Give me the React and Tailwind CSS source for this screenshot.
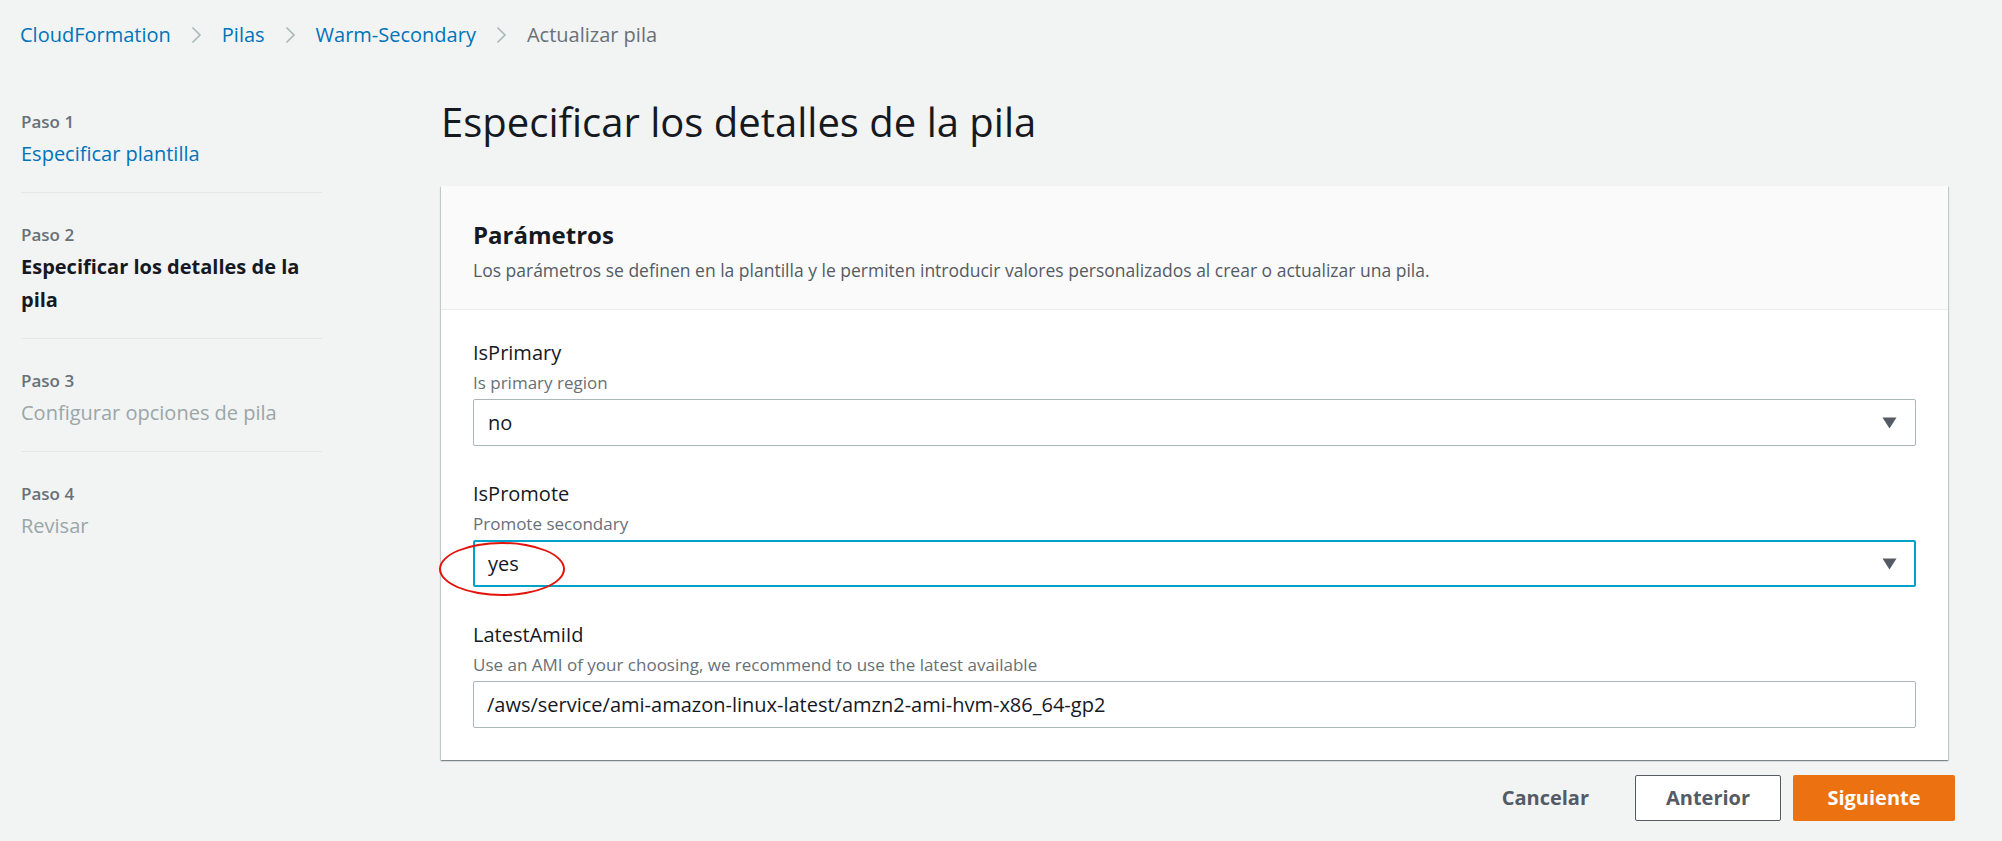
import React from "react";

const steps = [
  { step: "Paso 1", label: "Especificar plantilla", state: "link" },
  { step: "Paso 2", label: "Especificar los detalles de la pila", state: "active" },
  { step: "Paso 3", label: "Configurar opciones de pila", state: "disabled" },
  { step: "Paso 4", label: "Revisar", state: "disabled" },
];

function Chevron() {
  return (
    <svg width="11" height="18" viewBox="0 0 11 18" fill="none">
      <path d="M1.5 1.5L9 9L1.5 16.5" stroke="#aab7b8" strokeWidth="1.6" />
    </svg>
  );
}

function Caret() {
  return (
    <svg width="15" height="12" viewBox="0 0 15 12">
      <path d="M0.5 0.5H14.5L7.5 11.5Z" fill="#545b64" />
    </svg>
  );
}

function Field({ name, help, children }) {
  return (
    <div>
      <div className="text-[20px] leading-[28px] text-[#16191f]">{name}</div>
      <div className="mt-[4px] text-[17px] leading-[24px] text-[#687078]">{help}</div>
      <div className="mt-[4px]">{children}</div>
    </div>
  );
}

export default function App() {
  return (
    <div className="w-full h-[841px] overflow-hidden bg-[#f2f3f3] font-['Open_Sans',sans-serif] text-[#16191f]">
      {/* breadcrumb */}
      <div className="h-[70px] flex items-center gap-[20px] pl-[20px] text-[20px]">
        <span className="text-[#0073bb]">CloudFormation</span>
        <Chevron />
        <span className="text-[#0073bb]">Pilas</span>
        <Chevron />
        <span className="text-[#0073bb]">Warm-Secondary</span>
        <Chevron />
        <span className="text-[#687078]">Actualizar pila</span>
      </div>

      <div className="flex">
        {/* wizard steps */}
        <nav className="w-[322px] pl-[21px] pt-[10px] shrink-0">
          {steps.map((s, i) => (
            <div
              key={s.step}
              className={
                "pt-[30px] pb-[22px] " + (i < steps.length - 1 ? "border-b border-[#e3e7e8]" : "")
              }
            >
              <div className="text-[17px] leading-[24px] font-semibold text-[#687078]">{s.step}</div>
              <div
                className={
                  "mt-[3px] text-[20px] leading-[33px] " +
                  (s.state === "link"
                    ? "font-medium text-[#0073bb]"
                    : s.state === "active"
                    ? "font-bold text-[#16191f]"
                    : "font-medium text-[#9aa6a7]")
                }
              >
                {s.label}
              </div>
            </div>
          ))}
        </nav>

        {/* main */}
        <main className="ml-[119px] w-[1507px] shrink-0">
          <h1 className="pt-[28px] text-[40px] leading-[48px] font-normal text-[#16191f]">
            Especificar los detalles de la pila
          </h1>

          <section className="mt-[40px] bg-white shadow-[0_1px_1px_0_rgba(0,28,36,0.3),1px_1px_1px_0_rgba(0,28,36,0.15),-1px_1px_1px_0_rgba(0,28,36,0.15)]">
            <div className="bg-[#fafafa] border-b border-[#eaeded] px-[32px] pt-[33px] pb-[27px]">
              <h2 className="text-[24px] leading-[32px] font-bold text-[#16191f]">Parámetros</h2>
              <p className="mt-[7px] text-[17.5px] leading-[24px] text-[#545b64]">
                Los parámetros se definen en la plantilla y le permiten introducir valores personalizados al crear o actualizar una pila.
              </p>
            </div>

            <div className="px-[32px] pt-[29px] pb-[32px] flex flex-col gap-[34px]">
              <Field name="IsPrimary" help="Is primary region">
                <div className="h-[47px] flex items-center justify-between pl-[14px] pr-[18px] bg-white border border-[#aab7b8] rounded-[2px] text-[20px]">
                  <span>no</span>
                  <Caret />
                </div>
              </Field>

              <Field name="IsPromote" help="Promote secondary">
                <div className="relative h-[47px] flex items-center justify-between pl-[13px] pr-[17px] bg-white border-2 border-[#00a1c9] rounded-[2px] text-[20px]">
                  <span>yes</span>
                  <Caret />
                  <div className="absolute left-[-36px] top-[0px] w-[126px] h-[54px] rounded-[50%] border-2 border-[#e3120b] pointer-events-none" />
                </div>
              </Field>

              <Field name="LatestAmiId" help="Use an AMI of your choosing, we recommend to use the latest available">
                <div className="h-[47px] flex items-center pl-[13px] bg-white border border-[#aab7b8] rounded-[2px] text-[20px]">
                  /aws/service/ami-amazon-linux-latest/amzn2-ami-hvm-x86_64-gp2
                </div>
              </Field>
            </div>
          </section>

          <div className="mt-[15px] mr-[-7px] flex items-center justify-end text-[20px] font-bold">
            <span className="mr-[46px] text-[#545b64]">Cancelar</span>
            <button className="w-[146px] h-[46px] border border-[#545b64] rounded-[2px] bg-white text-[#545b64]">
              Anterior
            </button>
            <button className="ml-[12px] w-[162px] h-[46px] rounded-[2px] bg-[#ec7211] text-white">
              Siguiente
            </button>
          </div>
        </main>
      </div>
    </div>
  );
}
